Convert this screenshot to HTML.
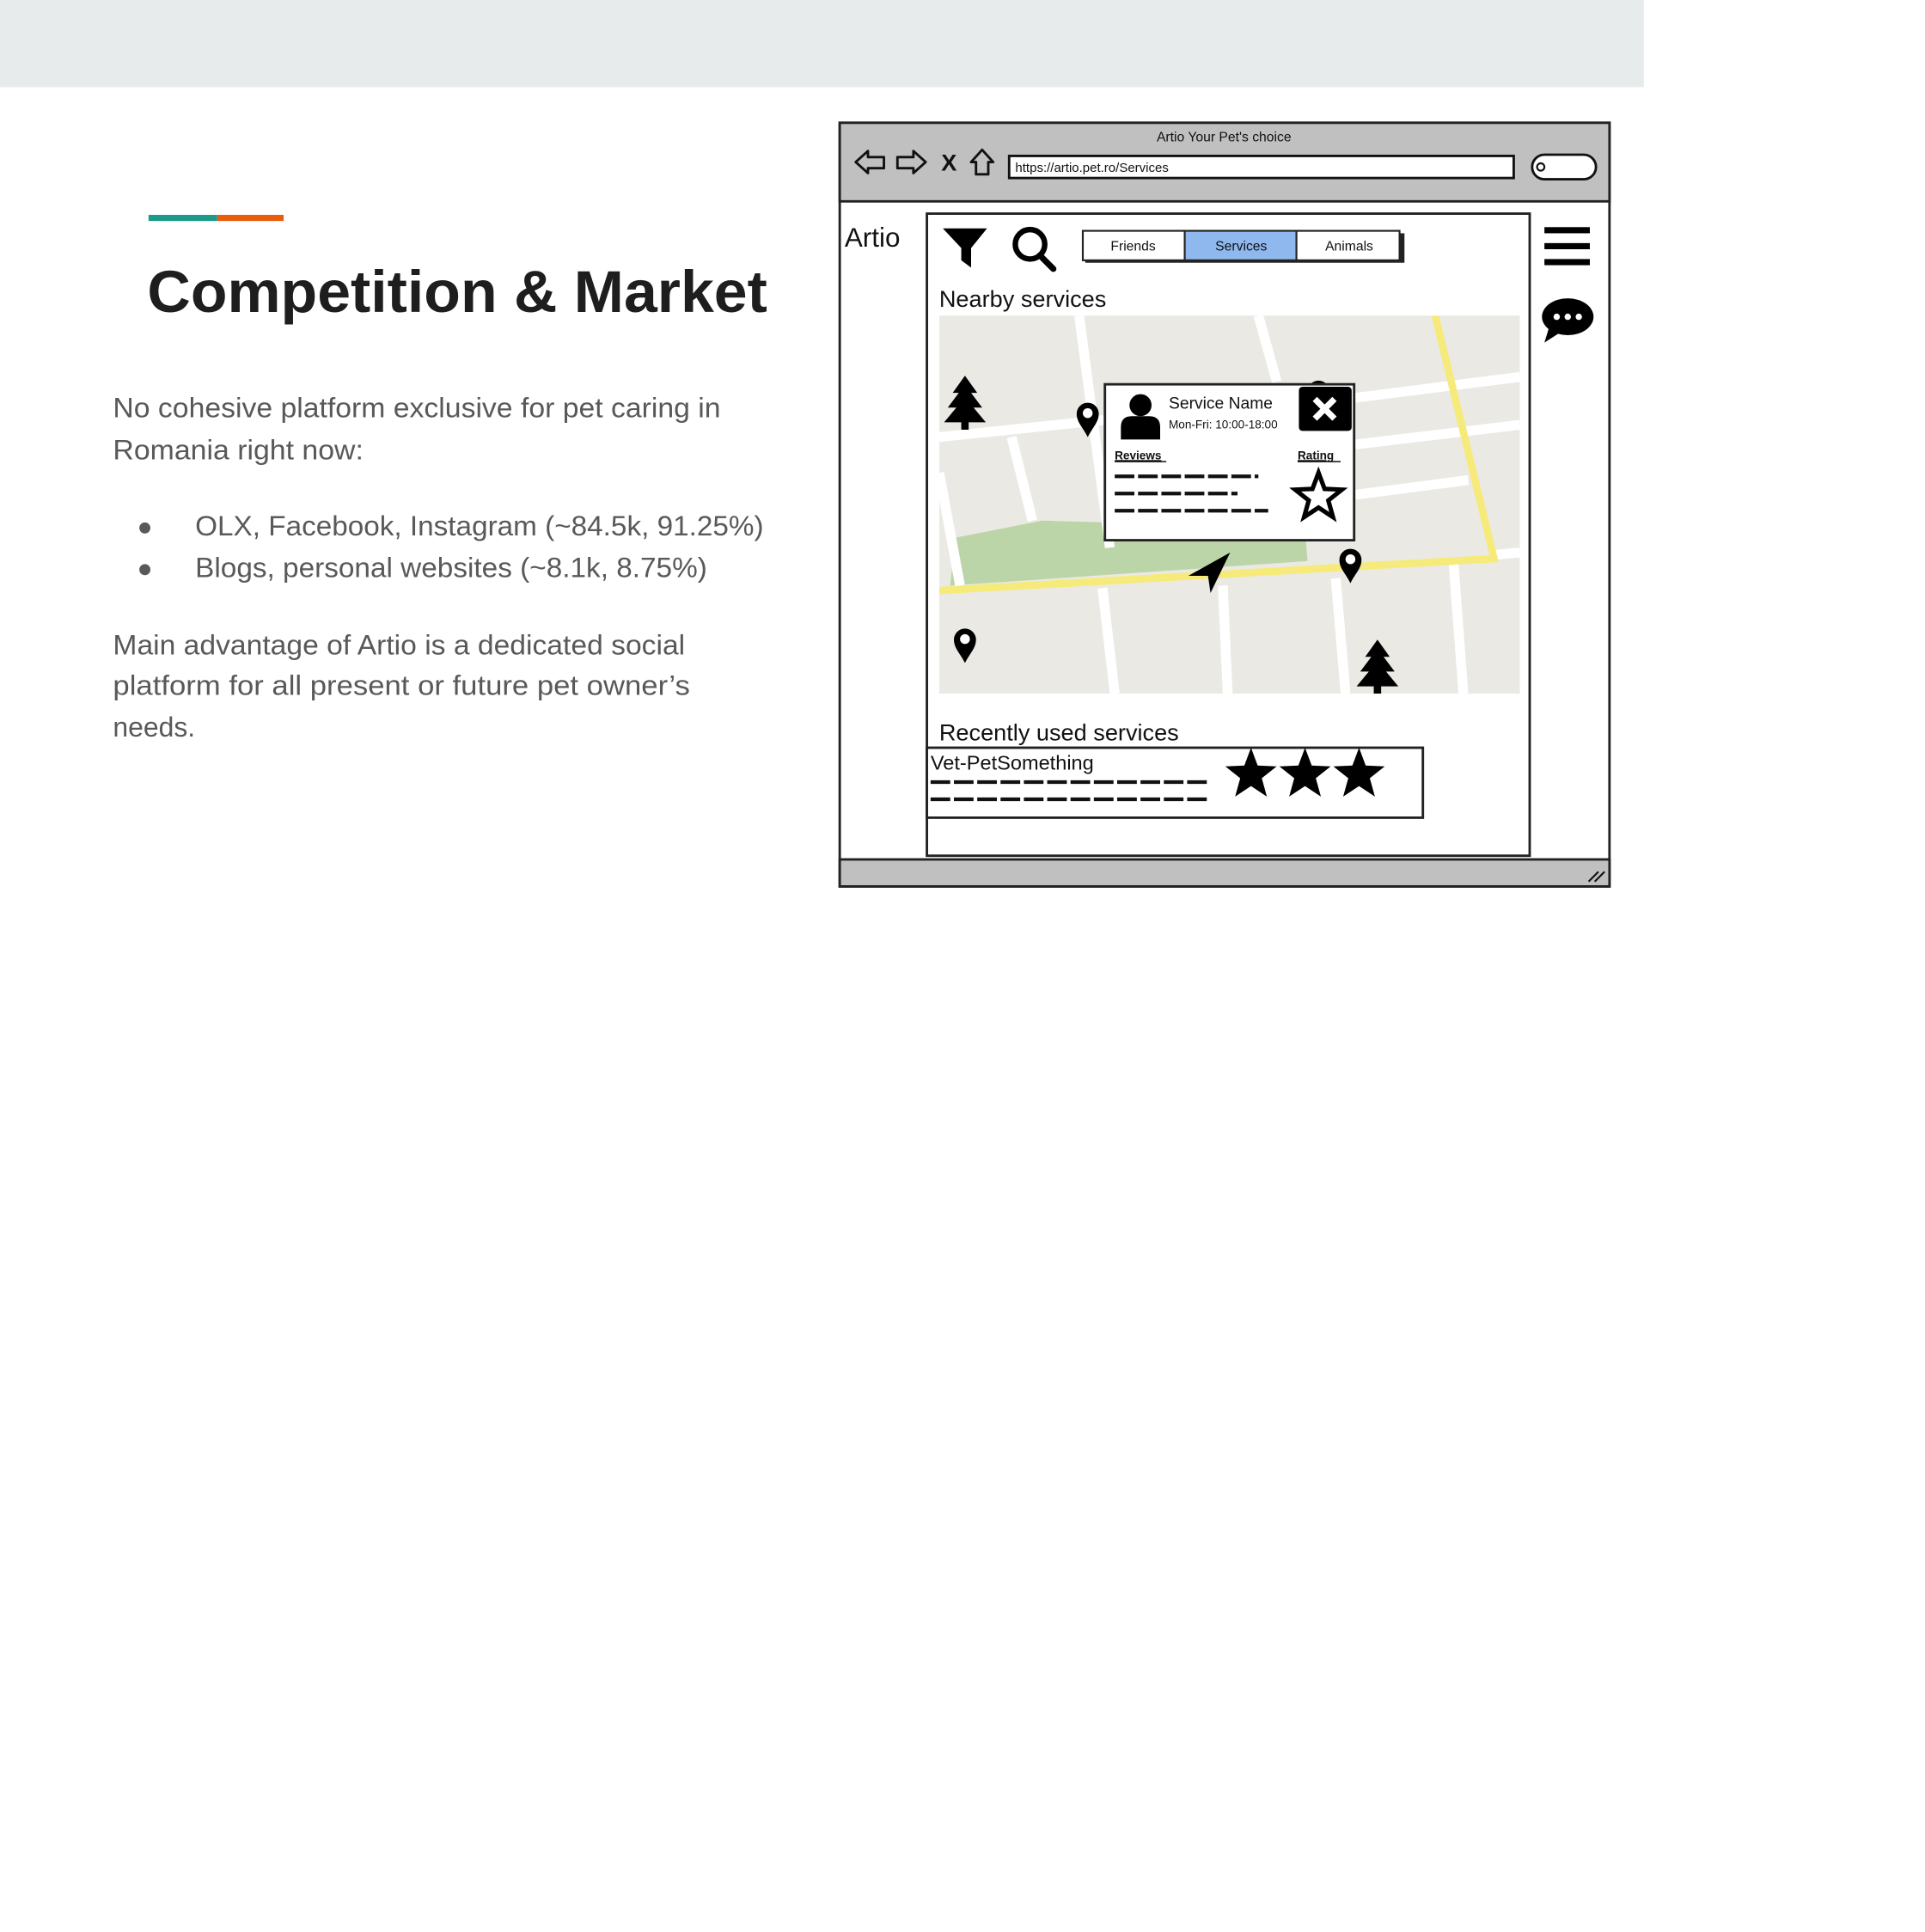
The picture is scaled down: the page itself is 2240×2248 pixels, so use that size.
<!DOCTYPE html>
<html><head><meta charset="utf-8"><style>
html,body{margin:0;padding:0;background:#fff;}
svg{display:block;}
</style></head><body>
<svg width="2240" height="2248" viewBox="0 0 1568 1573.6" xmlns="http://www.w3.org/2000/svg" font-family="Liberation Sans, sans-serif">
<defs>
<path id="star" d="M0,-1 L.247,-.34 L.951,-.309 L.399,.13 L.588,.809 L0,.42 L-.588,.809 L-.399,.13 L-.951,-.309 L-.247,-.34Z"/>
<g id="pin"><path d="M0,18 C-4,10 -9,6 -9,-1 A9,9 0 1 1 9,-1 C9,6 4,10 0,18Z" fill="#000"/><circle cx="0" cy="-1.5" r="4" fill="#fff"/></g>
<g id="tree"><polygon points="0,-22 -10,-8 -5,-8 -14,4 -7,4 -17,16 17,16 7,4 14,4 5,-8 10,-8" fill="#000"/><rect x="-3" y="15" width="6" height="7" fill="#000"/></g>
</defs>
<rect x="0" y="0" width="1339" height="71" fill="#e8ebeb"/>
<rect x="121" y="175" width="56" height="5" fill="#1b9a89"/>
<rect x="177" y="175" width="54" height="5" fill="#e85d0c"/>
<text x="120" y="254" font-size="48" font-weight="bold" fill="#1e1e1e" textLength="505" lengthAdjust="spacingAndGlyphs">Competition &amp; Market</text>
<g font-size="23" fill="#595959">
<text x="92" y="340" textLength="495" lengthAdjust="spacingAndGlyphs">No cohesive platform exclusive for pet caring in</text>
<text x="92" y="374" textLength="204" lengthAdjust="spacingAndGlyphs">Romania right now:</text>
<circle cx="118" cy="430" r="4.5"/><circle cx="118" cy="464" r="4.5"/>
<text x="159" y="436" textLength="463" lengthAdjust="spacingAndGlyphs">OLX, Facebook, Instagram  (~84.5k, 91.25%)</text>
<text x="159" y="470" textLength="417" lengthAdjust="spacingAndGlyphs">Blogs, personal websites  (~8.1k, 8.75%)</text>
<text x="92" y="533" textLength="466" lengthAdjust="spacingAndGlyphs">Main advantage of Artio is a dedicated social</text>
<text x="92" y="566" textLength="470" lengthAdjust="spacingAndGlyphs">platform for all present or future pet owner’s</text>
<text x="92" y="600" textLength="67" lengthAdjust="spacingAndGlyphs">needs.</text>
</g>
<!-- browser mockup -->
<rect x="684" y="100" width="627" height="622" fill="#fff" stroke="#222" stroke-width="2"/>
<rect x="684" y="100" width="627" height="64" fill="#c0c0c0" stroke="#222" stroke-width="2"/>
<text x="997" y="115" font-size="11" text-anchor="middle" fill="#111">Artio Your Pet's choice</text>
<path d="M697,132 L707,123 L707,128 L720,128 L720,137 L707,137 L707,141Z" fill="none" stroke="#111" stroke-width="2" stroke-linejoin="round"/>
<path d="M754,132 L744,123 L744,128 L731,128 L731,137 L744,137 L744,141Z" fill="none" stroke="#111" stroke-width="2" stroke-linejoin="round"/>
<text x="773" y="139" font-size="19" font-weight="bold" text-anchor="middle" fill="#111">X</text>
<path d="M791,132 L800,122 L809,132 L805,132 L805,142 L795,142 L795,132Z" fill="none" stroke="#111" stroke-width="2" stroke-linejoin="round"/>
<rect x="822" y="127" width="411" height="18" fill="#fff" stroke="#111" stroke-width="2"/>
<text x="827" y="140" font-size="10.5" fill="#111">https://artio.pet.ro/Services</text>
<rect x="1248" y="126" width="52" height="20" rx="10" fill="#fff" stroke="#111" stroke-width="2"/>
<circle cx="1255" cy="136" r="3" fill="none" stroke="#111" stroke-width="1.5"/>
<rect x="684" y="700" width="627" height="22" fill="#c0c0c0" stroke="#222" stroke-width="2"/>
<path d="M1294,718 L1302,710 M1299,718 L1307,710" stroke="#111" stroke-width="1.5"/>
<text x="688" y="201" font-size="22" fill="#111">Artio</text>
<rect x="755" y="174" width="491" height="523" fill="#fff" stroke="#222" stroke-width="2"/>
<!-- filter & search -->
<path d="M768,186 L804,186 L791,202 L791,218 L783,212 L783,202Z" fill="#000"/>
<circle cx="839" cy="199" r="12" fill="none" stroke="#000" stroke-width="4.5"/>
<line x1="847" y1="208" x2="858" y2="219" stroke="#000" stroke-width="5" stroke-linecap="round"/>
<rect x="884" y="190" width="260" height="24" fill="#222"/>
<rect x="882" y="188" width="83" height="24" fill="#fff" stroke="#222" stroke-width="1.5"/>
<rect x="965" y="188" width="91" height="24" fill="#8fb8ee" stroke="#222" stroke-width="1.5"/>
<rect x="1056" y="188" width="84" height="24" fill="#fff" stroke="#222" stroke-width="1.5"/>
<g font-size="11" text-anchor="middle" fill="#111"><text x="923" y="204">Friends</text><text x="1011" y="204">Services</text><text x="1099" y="204">Animals</text></g>
<text x="765" y="250" font-size="19" fill="#111">Nearby services</text>
<!-- hamburger / chat -->
<rect x="1258" y="185" width="37" height="5" fill="#000"/><rect x="1258" y="198" width="37" height="5" fill="#000"/><rect x="1258" y="211" width="37" height="5" fill="#000"/>
<ellipse cx="1277" cy="258" rx="21" ry="15" fill="#000"/><path d="M1262,266 L1258,279 L1272,270Z" fill="#000"/>
<circle cx="1268" cy="258" r="2.6" fill="#fff"/><circle cx="1277" cy="258" r="2.6" fill="#fff"/><circle cx="1286" cy="258" r="2.6" fill="#fff"/>
<!-- map -->
<svg x="765" y="257" width="473" height="308" viewBox="765 257 473 308" overflow="hidden">
<rect x="765" y="257" width="473" height="308" fill="#ebe9e3"/>
<polygon points="778,438 849,424 1063,430 1065,457 774,477" fill="#bcd5a8"/>
<g stroke="#fff" stroke-width="8" fill="none">
<line x1="879" y1="257" x2="904" y2="446"/><line x1="898" y1="479" x2="908" y2="565"/>
<line x1="1025" y1="257" x2="1040" y2="311"/>
<line x1="765" y1="356" x2="900" y2="342"/><line x1="1104" y1="324" x2="1238" y2="307"/>
<line x1="1104" y1="362" x2="1238" y2="346"/><line x1="1104" y1="403" x2="1196" y2="391"/>
<line x1="824" y1="356" x2="841" y2="424"/><line x1="765" y1="385" x2="782" y2="477"/>
<line x1="996" y1="477" x2="1000" y2="565"/><line x1="1088" y1="471" x2="1096" y2="565"/>
<line x1="1184" y1="459" x2="1192" y2="565"/><line x1="1217" y1="452" x2="1238" y2="450"/>
</g>
<polyline points="765,481 1217,455 1169,257" fill="none" stroke="#f6ea7a" stroke-width="6"/>
<use href="#tree" transform="translate(786,328)"/>
<use href="#tree" transform="translate(1122,543)"/>
<use href="#pin" transform="translate(886,338)"/>
<use href="#pin" transform="translate(1074,320)"/>
<use href="#pin" transform="translate(1100,457)"/>
<use href="#pin" transform="translate(786,522)"/>
<path d="M1002,450 L968,469 L984,469 L986,483Z" fill="#000"/>
</svg>
<!-- popup -->
<rect x="900" y="313" width="203" height="127" fill="#fff" stroke="#222" stroke-width="2"/>
<circle cx="929" cy="330" r="9" fill="#000"/>
<path d="M913,358 L913,348 Q913,339 922,339 L936,339 Q945,339 945,348 L945,358Z" fill="#000"/>
<text x="952" y="333" font-size="13.5" fill="#111">Service Name</text>
<text x="952" y="349" font-size="9.5" fill="#111">Mon-Fri: 10:00-18:00</text>
<rect x="1058" y="315" width="43" height="36" rx="3" fill="#000"/>
<path d="M1071,325 L1087,341 M1087,325 L1071,341" stroke="#fff" stroke-width="5"/>
<text x="908" y="374" font-size="9.5" font-weight="bold" fill="#111" text-decoration="underline">Reviews</text>
<text x="1057" y="374" font-size="9.5" font-weight="bold" fill="#111" text-decoration="underline">Rating</text>
<line x1="1057" y1="376" x2="1092" y2="376" stroke="#111"/><line x1="908" y1="376" x2="950" y2="376" stroke="#111"/>
<g stroke="#111" stroke-width="3" stroke-dasharray="16,3">
<line x1="908" y1="388" x2="1025" y2="388"/><line x1="908" y1="402" x2="1008" y2="402"/><line x1="908" y1="416" x2="1033" y2="416"/>
</g>
<use href="#star" transform="translate(1074,405) scale(20)" fill="#fff" stroke="#000" stroke-width="0.18"/>
<text x="765" y="603" font-size="19" fill="#111">Recently used services</text>
<rect x="755" y="609" width="404" height="57" fill="#fff" stroke="#222" stroke-width="2"/>
<text x="758" y="627" font-size="16.5" fill="#111">Vet-PetSomething</text>
<g stroke="#111" stroke-width="3" stroke-dasharray="16,3">
<line x1="758" y1="637" x2="983" y2="637"/><line x1="758" y1="651" x2="986" y2="651"/>
</g>
<use href="#star" transform="translate(1019,631) scale(22)" fill="#000"/>
<use href="#star" transform="translate(1063,631) scale(22)" fill="#000"/>
<use href="#star" transform="translate(1107,631) scale(22)" fill="#000"/>
</svg>
</body></html>
